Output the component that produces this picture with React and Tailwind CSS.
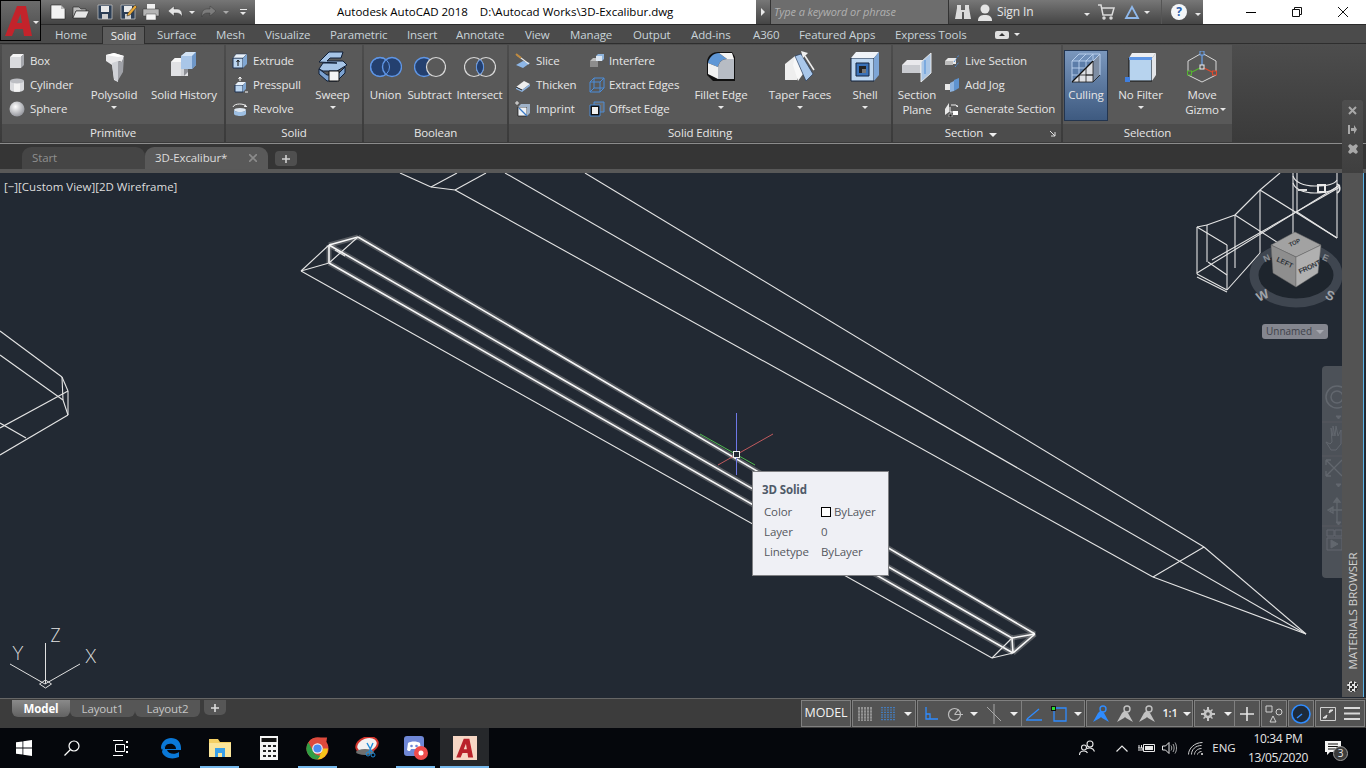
import React from 'react';

const Sm = ({ children }) => (
  <svg width="16" height="16" viewBox="0 0 16 16" className="shrink-0">{children}</svg>
);
const Lg = ({ children }) => (
  <svg width="32" height="32" viewBox="0 0 32 32" className="shrink-0">{children}</svg>
);

const Caret = ({ className = 'border-t-[#e8e8e8]' }) => (
  <span className={`inline-block w-0 h-0 border-x-[3px] border-x-transparent border-t-[3px] ${className}`} />
);
const BigCaret = () => (
  <span className="inline-block w-0 h-0 border-x-[4px] border-x-transparent border-t-[4px] border-t-[#efefef]" />
);

// ribbon small icons
const BoxIcon = () => (
  <Sm>
    <path d="M1 4h11v11H1z" fill="#d9dadd" />
    <path d="M1 4l3-3h11l-3 3z" fill="#f5f5f5" />
    <path d="M12 4l3-3v11l-3 3z" fill="#a6a8ad" />
  </Sm>
);
const CylinderIcon = () => (
  <Sm>
    <path d="M1 4v8c0 2 3 3 7 3s7-1 7-3V4z" fill="#d9dadd" />
    <path d="M5 6h6v8.6H5z" fill="#f3f3f3" />
    <ellipse cx="8" cy="4" rx="7" ry="2.6" fill="#bcbec3" />
  </Sm>
);
const SphereIcon = () => (
  <Sm>
    <defs>
      <radialGradient id="sph" cx="0.4" cy="0.35" r="0.7">
        <stop offset="0" stopColor="#ffffff" />
        <stop offset="1" stopColor="#8e9097" />
      </radialGradient>
    </defs>
    <circle cx="8" cy="8" r="7.5" fill="url(#sph)" />
  </Sm>
);
const ExtrudeIcon = () => (
  <Sm>
    <path d="M1 5h10v10H1z" fill="#bcd6f0" stroke="#1d3150" />
    <path d="M1 5l3-4h11l-4 4z" fill="#e9f1f9" stroke="#1d3150" strokeWidth=".5" />
    <path d="M11 5l4-4v10l-4 4z" fill="#7fa6d2" />
    <path d="M6 13V8M4.5 9L6 7l1.5 2" stroke="#111" fill="none" />
  </Sm>
);
const PresspullIcon = () => (
  <Sm>
    <path d="M3 8h8v7H3z" fill="#bcd6f0" stroke="#1d3150" />
    <path d="M3 8l3-3h8l-3 3z" fill="#e9f1f9" />
    <path d="M11 8l3-3v7l-3 3z" fill="#7fa6d2" />
    <path d="M8 4V0M6.5 2L8 0l1.5 2M13 15h3" stroke="#fff" fill="none" />
  </Sm>
);
const RevolveIcon = () => (
  <Sm>
    <ellipse cx="8" cy="9" rx="6" ry="2" fill="#dfe8f2" />
    <path d="M2 9v4c0 1 3 2 6 2s6-1 6-2V9c0 1-3 2-6 2S2 10 2 9z" fill="#9dbfe3" />
    <path d="M1 6c1-4 12-4 14 0" stroke="#ececec" fill="none" />
    <path d="M13 3l2 3-3 0" fill="#ececec" />
  </Sm>
);
const SliceIcon = () => (
  <Sm>
    <path d="M1 12l7-4 7 2-7 5z" fill="#8db6e6" />
    <path d="M2 2l12 9" stroke="#e8e8e8" strokeWidth="1.2" />
    <path d="M1 1l5 4" stroke="#c08a3e" strokeWidth="2" />
  </Sm>
);
const ThickenIcon = () => (
  <Sm>
    <path d="M1 10l8-6 6 3-8 6z" fill="#ededed" />
    <path d="M1 10v2l6 3 8-6V7l-8 6z" fill="#8eb3de" />
    <path d="M1 10l6 3" stroke="#222" />
  </Sm>
);
const ImprintIcon = () => (
  <Sm>
    <path d="M3 6h9v9H3z" fill="#eef2f6" stroke="#111" strokeWidth=".7" />
    <path d="M12 6l3-3v9l-3 3zM3 6l3-3h9l-3 3z" fill="#9fb2c8" />
    <path d="M4 7l8 8" stroke="#3a79c7" strokeWidth="1.2" />
    <path d="M2 0v4M0 2h4" stroke="#e8e8e8" />
  </Sm>
);
const InterfereIcon = () => (
  <Sm>
    <path d="M1 8h8v6H1z" fill="#8c8c8c" />
    <path d="M1 8l3-3h8l-3 3z" fill="#bdbdbd" />
    <path d="M7 3h6v5H7z" fill="#dce7f3" />
    <path d="M7 3l2-2h6l-2 2zM13 3l2-2v5l-2 2z" fill="#8fb4dc" />
  </Sm>
);
const ExtractIcon = () => (
  <Sm>
    <g fill="none" stroke="#4d8dd8">
      <path d="M1 5h10v10H1zM1 5l4-4h10v10l-4 4M11 5l4-4M5 1v10H15M1 15l4-4" />
    </g>
  </Sm>
);
const OffsetIcon = () => (
  <Sm>
    <path d="M5 1h10v10H5z" fill="#6a6a6a" stroke="#4d8dd8" />
    <path d="M1 4h10v11H1z" fill="#111" stroke="#4d8dd8" />
    <path d="M3 6h6v7H3z" fill="#f0f0f0" />
  </Sm>
);
const LiveSectionIcon = () => (
  <Sm>
    <path d="M1 8l3-3h8v6H1z" fill="#e8e8e8" />
    <path d="M1 8h8v4H1z" fill="#bdbdbd" />
    <path d="M10 9l5-7M11 14l4-5" stroke="#4d8dd8" strokeDasharray="2 1" />
  </Sm>
);
const AddJogIcon = () => (
  <Sm>
    <path d="M1 7h5v6H1z" fill="#e8e8e8" />
    <path d="M6 6l4-2v10l-4 1z" fill="#8eb3de" />
    <path d="M10 3l5-2v10l-5 3z" fill="#5f93cf" />
  </Sm>
);
const GenerateIcon = () => (
  <Sm>
    <path d="M1 8l4-6v9l-4 3z" fill="#e8e8e8" />
    <path d="M7 4h5l2 2M13 4v2" stroke="#eee" fill="none" />
    <path d="M6 6v5h3" stroke="#eee" fill="none" />
    <path d="M9 10h5v4H9z" fill="#fff" />
    <path d="M5 13h3v3H5z" fill="#222" stroke="#eee" strokeWidth=".5" />
  </Sm>
);

// ribbon large icons
const PolysolidIcon = () => (
  <Lg>
    <path d="M8 4l8-2 10 3-2 6-3-1-1 21-4-2-2-15-6-4z" fill="#e8e8ea" />
    <path d="M20 10l4 1 2-6-1 16-6 10z" fill="#9fa1a7" />
    <path d="M8 4l8-2 10 3-6 1z" fill="#ffffff" />
    <path d="M14 12l2 16 4 3V10z" fill="#cfd1d6" />
  </Lg>
);
const HistoryIcon = () => (
  <Lg>
    <path d="M3 11l4-4h13v18H3z" fill="#e0e1e4" />
    <path d="M3 11l4-4h13l-4 4z" fill="#f7f7f7" />
    <path d="M16 11l4-4v14l-4 4z" fill="#8d8f95" />
    <path d="M16 11h-3v14h3z" fill="#d0d2d6" />
    <path d="M13 5l5-4h10v13l-4 4H13z" fill="#a9c6e8" />
    <path d="M13 5l5-4h10l-4 4z" fill="#d4e4f5" />
    <path d="M24 5l4-4v13l-4 4z" fill="#6e97c8" />
  </Lg>
);
const SweepIcon = () => (
  <Lg>
    <path d="M2 11L12 1h14l-2 6H13l-3 3h16l4 4-10 6H6l-4-2 4-6h14z" fill="#a6c4e6" stroke="#0f1f38" strokeWidth="1" />
    <path d="M2 18l8 6h10l8-8v6l-8 8H10l-8-7z" fill="#7ca2d0" stroke="#0f1f38" strokeWidth="1" />
    <path d="M12 20h10v10H12z" fill="#f4f4f4" stroke="#111" />
  </Lg>
);
const UnionIcon = () => (
  <Lg>
    <circle cx="10" cy="16" r="9.5" fill="#24406f" stroke="#5f96e6" strokeWidth="1.4" />
    <circle cx="22" cy="16" r="9.5" fill="#24406f" stroke="#5f96e6" strokeWidth="1.4" />
    <circle cx="10" cy="16" r="9.5" fill="none" stroke="#5f96e6" strokeWidth="1" />
  </Lg>
);
const SubtractIcon = () => (
  <Lg>
    <circle cx="10" cy="16" r="9.5" fill="#24406f" stroke="#5f96e6" strokeWidth="1.4" />
    <circle cx="22" cy="16" r="9.5" fill="#595959" stroke="#d8d8d8" strokeWidth="1.2" />
  </Lg>
);
const IntersectIcon = () => (
  <Lg>
    <circle cx="10" cy="16" r="9.5" fill="none" stroke="#d8d8d8" strokeWidth="1.2" />
    <circle cx="22" cy="16" r="9.5" fill="none" stroke="#d8d8d8" strokeWidth="1.2" />
    <path d="M16 8.6a9.5 9.5 0 010 14.8a9.5 9.5 0 010-14.8z" fill="#24406f" stroke="#5f96e6" />
  </Lg>
);
const FilletIcon = () => (
  <Lg>
    <path d="M2 10C3 4 8 1 13 1h14l3 5v24H8l-6-6z" fill="#101010" />
    <path d="M3 12C4 6 9 2 14 2l8 6c-5 0-8 3-9 8z" fill="#5f97d6" />
    <path d="M13 16c1-5 4-8 9-8h7v20H13z" fill="#b7bcc4" />
    <path d="M14 2h13l2 6h-7z" fill="#f3f3f3" />
    <path d="M3 12l10 4v12l-10-5z" fill="#f1f1f1" />
  </Lg>
);
const TaperIcon = () => (
  <Lg>
    <path d="M1 13L11 5l6 4-4 20H1z" fill="#eeeeee" />
    <path d="M11 5l8 18-5 7-5-16z" fill="#f8f8f8" />
    <path d="M11 5l6-2 12 20-7 7z" fill="#a9c7ea" stroke="#1a2f50" strokeWidth=".6" />
    <path d="M21 5l9 14" stroke="#f0f0f0" strokeWidth="1.5" />
    <path d="M17 0l7 2-5 5z" fill="#f0f0f0" />
  </Lg>
);
const ShellIcon = () => (
  <Lg>
    <path d="M2 7h23v23H2z" fill="#bcd6f0" stroke="#13233d" />
    <path d="M2 7l5-6h23l-5 6z" fill="#f0f4f9" />
    <path d="M25 7l5-6v23l-5 6z" fill="#7ea6d6" />
    <path d="M7 12h13v13H7z" fill="#3a72b8" stroke="#13233d" />
    <path d="M10 15h7v7h-7z" fill="#222" />
    <path d="M13 18h4v4h-4z" fill="#777" />
  </Lg>
);
const SectionPlaneIcon = () => (
  <Lg>
    <path d="M1 14l5-5h16v13H1z" fill="#e9e9ec" />
    <path d="M1 14h18v8H1z" fill="#c9cbd0" />
    <path d="M20 11l10-9v20l-10 9z" fill="#aac6e6" stroke="#e8e8e8" />
    <path d="M24 9v14" stroke="#4d8dd8" />
  </Lg>
);
const CullingIcon = () => (
  <Lg>
    <path d="M2 9h21v21H2z" fill="#5c7da9" />
    <path d="M2 9l7-7h21l-7 7z" fill="#6f8fb9" />
    <path d="M23 9l7-7v21l-7 7z" fill="#55749f" />
    <path d="M2 30L23 9v21z" fill="#dfe0e4" />
    <path d="M23 9l7-7v21l-7 7z" fill="#9a9ea6" fillOpacity=".6" />
    <g stroke="#bcd3ef" strokeWidth=".9" fill="none">
      <path d="M2 9h21M9 9v14M16 9v7M2 16h14M2 23h7M2 9v21M2 9l7-7h21v21M9 9l7-7M16 9l7-7M23 9l7-7M23 2v7" />
    </g>
    <g stroke="#1a1a1a" strokeWidth=".8" fill="none">
      <path d="M23 9v21H2M16 16v14M9 23v7M16 23h7M9 23h14M23 30l7-7" />
    </g>
    <path d="M2 30L23 9" stroke="#111" strokeWidth="1.2" />
  </Lg>
);
const NoFilterIcon = () => (
  <Lg>
    <path d="M4 7h23v23H4z" fill="#b7d3ee" stroke="#111" />
    <path d="M4 7l3-5h24l-4 5z" fill="#eceef1" />
    <path d="M27 7l4-5v22l-4 6z" fill="#e4e6e9" />
    <path d="M4 6h23v3H4z" fill="#5f97e6" />
    <path d="M0 26h5v5H0z" fill="#3f7fe0" />
  </Lg>
);
const GizmoIcon = () => (
  <Lg>
    <path d="M16 2L30 10v14l-14 7L2 24V10z" fill="none" stroke="#d8d8d8" />
    <path d="M16 16V4" stroke="#6aa3ee" strokeWidth="1.2" />
    <path d="M16 16L4 22" stroke="#55b52f" strokeWidth="1.2" />
    <path d="M16 16l12 6" stroke="#e0492c" strokeWidth="1.2" />
    <rect x="14" y="0" width="4" height="4" fill="#595959" stroke="#6aa3ee" />
    <rect x="14" y="14" width="4" height="4" fill="#595959" stroke="#eee" />
    <rect x="1.5" y="20" width="4" height="4" fill="#595959" stroke="#55b52f" />
    <rect x="26.5" y="20" width="4" height="4" fill="#595959" stroke="#e0492c" />
  </Lg>
);

const SmallRow = ({ icon, label }) => (
  <div className="h-6 flex items-center gap-[5px] whitespace-nowrap">
    {icon}
    <span>{label}</span>
  </div>
);

const LargeBtn = ({ icon, lines, className, arrow = true }) => (
  <div className={`flex flex-col items-center pt-[6px] shrink-0 ${className}`}>
    {icon}
    <div className="mt-[4px] leading-[15px] text-center whitespace-nowrap">
      {lines.map((l) => (
        <div key={l}>{l}</div>
      ))}
    </div>
    {arrow && <div className="leading-[6px] h-[6px]"><Caret /></div>}
  </div>
);

const Panel = ({ title, className, children, footer }) => (
  <div className={`h-[97px] flex flex-col bg-[#595959] shrink-0 ${className}`}>
    <div className="h-[79px] flex">{children}</div>
    <div className="h-[18px] bg-[#4c4c4c] flex items-center justify-center leading-none relative">
      {footer || title}
    </div>
  </div>
);

const QatNew = () => (
  <svg width="18" height="18" viewBox="0 0 18 18"><path d="M2 2h10l4 4v10H2z" fill="#f2f2f2" stroke="#222" strokeWidth=".6" /><path d="M12 2v4h4z" fill="#bbb" /></svg>
);
const QatOpen = () => (
  <svg width="18" height="18" viewBox="0 0 18 18"><path d="M1 4h6l2 2h5v2H4l-3 7z" fill="#bdbdbd" stroke="#222" strokeWidth=".6" /><path d="M4 8h13l-3 7H1z" fill="#e6e6e6" stroke="#222" strokeWidth=".6" /></svg>
);
const QatSave = ({ pen }) => (
  <svg width="18" height="18" viewBox="0 0 18 18"><path d="M2 2h14v14H2z" fill="#2c3e55" stroke="#ccc" strokeWidth=".7" /><path d="M5 3h8v6H5z" fill="#e8e8e8" /><path d="M6 11h6v5H6z" fill="#cfcfcf" />{pen && <path d="M9 10l7-8 2 2-7 8-3 1z" fill="#e9a93a" stroke="#222" strokeWidth=".5" />}</svg>
);
const QatPrint = () => (
  <svg width="18" height="18" viewBox="0 0 18 18"><path d="M5 1h8v5H5z" fill="#f0f0f0" /><path d="M1 6h16v7H1z" fill="#b5b5b5" stroke="#333" strokeWidth=".5" /><path d="M4 11h10v6H4z" fill="#f5f5f5" stroke="#444" strokeWidth=".5" /></svg>
);
const QatArrow = ({ dim, flip }) => (
  <svg width="16" height="16" viewBox="0 0 16 16" className={flip ? '-scale-x-100' : ''}><path d="M1 7l6-5v3h3c3 0 5 2 5 5v3c-1-3-3-4-5-4H7v3z" fill={dim ? '#7c7c7c' : '#e4e4e4'} stroke="#333" strokeWidth=".4" /></svg>
);

const StatusIcon = {
  grid: (
    <svg width="14" height="14" viewBox="0 0 14 14" stroke="#d4d4d4" strokeWidth="1"><path d="M1 0v14M4 0v14M7 0v14M10 0v14M13 0v14" /><path d="M0 3h14M0 6h14M0 9h14M0 12h14" stroke="#535353" strokeOpacity=".6" /></svg>
  ),
  dots: (
    <svg width="14" height="14" viewBox="0 0 14 14" stroke="#3a96ff" strokeWidth="1.200" strokeDasharray="1.200 1.200"><path d="M1 0v14M4 0v14M7 0v14M10 0v14M13 0v14" /></svg>
  ),
  ortho: (
    <svg width="14" height="14" viewBox="0 0 14 14" fill="none" stroke="#2f8cff" strokeWidth="1.3"><path d="M2 0v12h12M2 7h4v5" /></svg>
  ),
  polar: (
    <svg width="16" height="16" viewBox="0 0 16 16" fill="none" stroke="#bdbdbd" strokeWidth="1.2"><circle cx="7.5" cy="8.5" r="6" /><path d="M7.5 8.5H16M7.5 8.5l4-5" /></svg>
  ),
  iso: (
    <svg width="16" height="20" viewBox="0 0 16 20" fill="none" stroke="#a8a8a8" strokeWidth="1"><path d="M8 0v20M1 3l14 14" /></svg>
  ),
  osnap: (
    <svg width="18" height="14" viewBox="0 0 18 14" fill="none" stroke="#2f8cff" strokeWidth="1.3"><path d="M1 13h16M2 12L14 2" /></svg>
  ),
  square: (
    <svg width="16" height="16" viewBox="0 0 16 16" fill="none"><path d="M3 2h12v13H3z" stroke="#2f8cff" strokeWidth="1.3" /><path d="M0 0h5v5H0z" fill="#111" /><path d="M1 1h3v3H1z" fill="#2ee02e" /></svg>
  ),
  anno: (color) => (
    <svg width="18" height="18" viewBox="0 0 18 18"><path d="M9 5l3 3 5 9-7-4-1-1-1 1-7 4 5-9z" fill={color} /><circle cx="11" cy="4" r="3" fill="#525252" stroke={color} strokeWidth="1.4" /></svg>
  ),
  gear: (
    <svg width="14" height="14" viewBox="0 0 14 14"><circle cx="7" cy="7" r="4.4" fill="#c6c6c6" /><path d="M6 0h2v14H6zM0 6h14v2H0zM2 3l1-1 9 9-1 1zM11 2l1 1-9 9-1-1z" fill="#c6c6c6" /><circle cx="7" cy="7" r="1.8" fill="#525252" /></svg>
  ),
  plus: (
    <svg width="14" height="14" viewBox="0 0 14 14" stroke="#e4e4e4" strokeWidth="1.6"><path d="M7 0v14M0 7h14" /></svg>
  ),
  shapes: (
    <svg width="18" height="18" viewBox="0 0 18 18" fill="none" stroke="#d0d0d0"><path d="M1 1h6v6H1zM5 17l3-6 3 6z" /><circle cx="14" cy="7" r="3" /></svg>
  ),
  clean: (
    <svg width="20" height="20" viewBox="0 0 20 20" fill="none"><circle cx="10" cy="10" r="9" fill="#1d2a3a" stroke="#2f8cff" strokeWidth="1.6" /><path d="M6 14l5-4" stroke="#2f8cff" strokeWidth="1.4" /></svg>
  ),
  full: (
    <svg width="16" height="14" viewBox="0 0 16 14"><path d="M.5.5h15v13H.5z" fill="none" stroke="#d0d0d0" /><path d="M3 11l4-3-1 3zM13 3L9 6l1-3z" fill="#e0e0e0" stroke="#e0e0e0" /></svg>
  ),
  menu: (
    <svg width="16" height="13" viewBox="0 0 16 13" stroke="#d8d8d8" strokeWidth="2"><path d="M0 1h16M0 6.5h16M0 12h16" /></svg>
  ),
};

// wireframe geometry in page coordinates
const glowLines = [
  [329, 245, 1012, 638],
  [358, 237, 1035, 634],
  [329, 263, 1013, 653],
  [329, 245, 358, 237],
  [329, 245, 329, 263],
  [1012, 638, 1035, 634],
  [1012, 638, 1013, 653],
  [1013, 653, 1035, 634],
];
const thinLines = [
  [301, 271, 329, 245], [301, 271, 329, 263], [329, 263, 358, 237], [301, 271, 992, 658],
  [992, 658, 1012, 638], [992, 658, 1013, 653], [335, 250, 345, 256],
  [400, 173, 431, 187], [431, 187, 457, 173], [431, 187, 455, 190], [455, 190, 486, 173],
  [455, 190, 1153, 577], [505, 173, 1306, 634], [585, 173, 1204, 547], [1204, 547, 1153, 577],
  [1204, 547, 1306, 634], [1153, 577, 1306, 634],
  [0, 331, 62, 377], [0, 355, 63, 400], [62, 377, 68, 391], [62, 377, 63, 400], [68, 391, 68, 415],
  [63, 400, 68, 415], [68, 391, 0, 428], [68, 415, 0, 455], [0, 423, 26, 438],
  [1197, 227, 1197, 274], [1197, 227, 1227, 245], [1227, 245, 1227, 290], [1197, 274, 1227, 290],
  [1197, 277, 1227, 292], [1207, 225, 1207, 262], [1197, 227, 1207, 225], [1207, 225, 1235, 215],
  [1235, 215, 1260, 190], [1260, 190, 1280, 173], [1235, 215, 1235, 268], [1260, 190, 1260, 253],
  [1260, 190, 1337, 238], [1235, 215, 1297, 255], [1197, 273, 1340, 185], [1212, 260, 1340, 187],
  [1293, 173, 1293, 247], [1337, 173, 1337, 238], [1227, 290, 1260, 253], [1297, 212, 1337, 238],
  [1208, 262, 1227, 275], [1297, 173, 1297, 212],
];

const Taskbtn = ({ className, children }) => (
  <div className={`h-10 flex items-center justify-center shrink-0 ${className}`}>{children}</div>
);

const App = () => {
  return (
    <div className="relative w-[1366px] h-[768px] overflow-hidden flex flex-col bg-[#3b3b3b] font-['Open_Sans',sans-serif] text-[11.5px] tracking-[-0.12px] text-[#e6e6e6]">
      {/* application button */}
      <div className="absolute left-0 top-0 w-[41px] h-[41px] z-20 bg-gradient-to-b from-[#6b6b6b] to-[#4a4a4a] border border-black flex items-center">
        <svg width="30" height="32" viewBox="0 0 30 32" className="ml-[3px]">
          <path fillRule="evenodd" d="M1 31L13 1h9l6 30h-8l-1-7H11l-3 7zM13 18h5l-1.500-9z" fill="#c3232b" />
        </svg>
        <span className="ml-[-1px] mt-[-1px]"><Caret /></span>
      </div>

      {/* title bar */}
      <div className="h-6 flex bg-white shrink-0">
        <div className="w-[255px] ml-0 pl-[46px] flex items-center bg-gradient-to-b from-[#767676] to-[#444444] shrink-0">
          <div className="w-6 flex justify-center"><QatNew /></div>
          <div className="w-6 flex justify-center"><QatOpen /></div>
          <div className="w-6 flex justify-center"><QatSave /></div>
          <div className="w-6 flex justify-center"><QatSave pen /></div>
          <div className="w-6 flex justify-center"><QatPrint /></div>
          <div className="w-6 flex justify-center"><QatArrow /></div>
          <div className="w-[11px] flex justify-center"><Caret /></div>
          <div className="w-6 flex justify-center"><QatArrow dim flip /></div>
          <div className="w-[11px] flex justify-center"><Caret className="border-t-[#aaaaaa]" /></div>
          <div className="w-[24px] flex flex-col items-center gap-[2px]">
            <div className="w-[7px] h-[1px] bg-[#e8e8e8]" />
            <Caret />
          </div>
        </div>
        <div className="w-[501px] pl-[82px] flex items-center whitespace-pre tracking-normal text-black shrink-0">
          Autodesk AutoCAD 2018    D:\Autocad Works\3D-Excalibur.dwg
        </div>
        <div className="w-[447px] flex items-center bg-gradient-to-b from-[#777777] to-[#454545] shrink-0">
          <div className="w-[15px] h-full flex items-center justify-center border-r border-[#333]">
            <span className="w-0 h-0 border-y-[4px] border-y-transparent border-l-[4px] border-l-[#e8e8e8]" />
          </div>
          <div className="w-[178px] h-full pl-[3px] flex items-center italic text-[11px] text-[#b0b0b0] bg-[#6d6d6d] border-r border-[#333] whitespace-nowrap">
            Type a keyword or phrase
          </div>
          <div className="w-[25px] flex justify-center ml-[1px]">
            <svg width="16" height="16" viewBox="0 0 16 16" fill="#dcdcdc"><path d="M2 1h4v5h4V1h4v3l2 11H9V8H7v7H0L2 4z" /></svg>
          </div>
          <div className="flex items-center gap-[4px] w-[116px] pl-[2px] text-[12px]">
            <svg width="16" height="17" viewBox="0 0 16 17" fill="#e4e4e4"><circle cx="8" cy="5" r="4.500" /><path d="M1 17c0-5 3-6 7-6s7 1 7 6z" /></svg>
            <span>Sign In</span>
            <span className="ml-auto mr-[1px]"><Caret /></span>
          </div>
          <div className="w-[24px] flex justify-center ml-[3px]">
            <svg width="17" height="16" viewBox="0 0 17 16" fill="none" stroke="#dcdcdc" strokeWidth="1.500"><path d="M0 1h3l2 10h9l2-7H4" /><circle cx="6" cy="14" r="1" /><circle cx="13" cy="14" r="1" /></svg>
          </div>
          <div className="w-[24px] flex justify-center ml-[2px]">
            <svg width="16" height="15" viewBox="0 0 16 15" fill="none" stroke="#8fb8ea" strokeWidth="1.800"><path d="M8 2L2 13h12z" /></svg>
          </div>
          <Caret />
          <div className="w-[1px] h-full bg-[#555] ml-[11px]" />
          <div className="w-[16px] h-[16px] ml-[9px] rounded-full bg-[#f4f6f8] text-[#2a5fae] font-bold text-[12px] leading-[16px] text-center">?</div>
          <span className="ml-[8px]"><Caret /></span>
        </div>
        <div className="flex-1 flex items-center text-black">
          <div className="w-[47px] ml-[24px] flex justify-center"><div className="w-[10px] h-[1px] bg-black" /></div>
          <div className="w-[46px] flex justify-center">
            <svg width="10" height="10" viewBox="0 0 10 10" fill="none" stroke="#111"><path d="M.5 2.500h7v7h-7zM2.500 2.500v-2h7v7h-2" /></svg>
          </div>
          <div className="w-[46px] flex justify-center">
            <svg width="10" height="10" viewBox="0 0 10 10" stroke="#111"><path d="M0 0l10 10M10 0L0 10" /></svg>
          </div>
        </div>
      </div>

      {/* ribbon tabs */}
      <div className="h-5 flex items-center shrink-0 bg-[#4b4b4b] border-t border-[#2a2a2a] border-b border-b-[#2e2e2e] pl-[42px] pt-[1px] text-[#c9d3d9] whitespace-nowrap">
        <div className="w-[60px] pl-[13px]">Home</div>
        <div className="w-[43px] h-[18px] mt-[1px] flex items-center justify-center bg-[#5c5c5c] border-x border-t border-[#2e2e2e] text-[#f0f0f0]">Solid</div>
        <div className="w-[71px] pl-[12px]">Surface</div>
        <div className="w-[49px]">Mesh</div>
        <div className="w-[65px]">Visualize</div>
        <div className="w-[77px]">Parametric</div>
        <div className="w-[49px]">Insert</div>
        <div className="w-[69px]">Annotate</div>
        <div className="w-[45px]">View</div>
        <div className="w-[63px]">Manage</div>
        <div className="w-[58px]">Output</div>
        <div className="w-[62px]">Add-ins</div>
        <div className="w-[46px]">A360</div>
        <div className="w-[96px]">Featured Apps</div>
        <div className="w-[100px]">Express Tools</div>
        <div className="flex items-center gap-[5px]">
          <div className="w-[14px] h-[8px] rounded-[2px] bg-[#e0e0e0] flex items-center justify-center">
            <span className="w-0 h-0 border-x-[3px] border-x-transparent border-b-[3px] border-b-[#333]" />
          </div>
          <Caret />
        </div>
      </div>

      {/* ribbon panels */}
      <div className="h-[100px] flex gap-[2px] pl-[2px] pt-[1px] shrink-0 bg-gradient-to-b from-[#4d4d4d] to-[#3a3a3a] border-b border-[#8c8c8c]">
        <Panel title="Primitive" className="w-[222px]">
          <div className="w-[82px] pl-[7px] pt-[4px]">
            <SmallRow icon={<BoxIcon />} label="Box" />
            <SmallRow icon={<CylinderIcon />} label="Cylinder" />
            <SmallRow icon={<SphereIcon />} label="Sphere" />
          </div>
          <LargeBtn icon={<PolysolidIcon />} lines={['Polysolid']} className="w-[60px]" />
          <LargeBtn icon={<HistoryIcon />} lines={['Solid History']} arrow={false} className="w-[80px]" />
        </Panel>
        <Panel title="Solid" className="w-[136px]">
          <div className="w-[77px] pl-[6px] pt-[4px]">
            <SmallRow icon={<ExtrudeIcon />} label="Extrude" />
            <SmallRow icon={<PresspullIcon />} label="Presspull" />
            <SmallRow icon={<RevolveIcon />} label="Revolve" />
          </div>
          <LargeBtn icon={<SweepIcon />} lines={['Sweep']} className="w-[59px]" />
        </Panel>
        <Panel title="Boolean" className="w-[143px]">
          <LargeBtn icon={<UnionIcon />} lines={['Union']} arrow={false} className="w-[43px]" />
          <LargeBtn icon={<SubtractIcon />} lines={['Subtract']} arrow={false} className="w-[45px]" />
          <LargeBtn icon={<IntersectIcon />} lines={['Intersect']} arrow={false} className="w-[55px]" />
        </Panel>
        <Panel title="Solid Editing" className="w-[382px]">
          <div className="w-[74px] pl-[6px] pt-[4px]">
            <SmallRow icon={<SliceIcon />} label="Slice" />
            <SmallRow icon={<ThickenIcon />} label="Thicken" />
            <SmallRow icon={<ImprintIcon />} label="Imprint" />
          </div>
          <div className="w-[105px] pl-[6px] pt-[4px] [&>div]:gap-[4px]">
            <SmallRow icon={<InterfereIcon />} label="Interfere" />
            <SmallRow icon={<ExtractIcon />} label="Extract Edges" />
            <SmallRow icon={<OffsetIcon />} label="Offset Edge" />
          </div>
          <LargeBtn icon={<FilletIcon />} lines={['Fillet Edge']} className="w-[66px]" />
          <LargeBtn icon={<TaperIcon />} lines={['Taper Faces']} className="w-[92px]" />
          <LargeBtn icon={<ShellIcon />} lines={['Shell']} className="w-[38px]" />
        </Panel>
        <Panel
          className="w-[168px]"
          footer={
            <>
              <span>Section</span>
              <span className="ml-[6px] mr-[12px] leading-none"><BigCaret /></span>
              <svg width="7" height="7" viewBox="0 0 7 7" stroke="#e0e0e0" fill="none" className="absolute right-[5px] top-[6px]"><path d="M1 1l5 5M2 6h4V2" /></svg>
            </>
          }
        >
          <LargeBtn icon={<SectionPlaneIcon />} lines={['Section', 'Plane']} arrow={false} className="w-[48px]" />
          <div className="pl-[3px] pt-[4px]">
            <SmallRow icon={<LiveSectionIcon />} label="Live Section" />
            <SmallRow icon={<AddJogIcon />} label="Add Jog" />
            <SmallRow icon={<GenerateIcon />} label="Generate Section" />
          </div>
        </Panel>
        <Panel title="Selection" className="w-[169px]">
          <div className="w-[46px] pl-[1px] pt-[5px]">
            <div className="w-[44px] h-[71px] flex flex-col items-center pt-[1px] gap-[3px] leading-[15px] bg-gradient-to-b from-[#7a97bd] to-[#3e5a80] border border-[#23354f]">
              <CullingIcon />
              <span>Culling</span>
            </div>
          </div>
          <LargeBtn icon={<NoFilterIcon />} lines={['No Filter']} className="w-[63px]" />
          <div className="w-[60px] relative">
            <LargeBtn icon={<GizmoIcon />} lines={['Move', 'Gizmo']} arrow={false} className="w-[60px]" />
            <span className="absolute right-[6px] top-[56px] leading-none"><Caret /></span>
          </div>
        </Panel>
      </div>

      {/* file tabs */}
      <div className="h-[29px] flex flex-col shrink-0 bg-[#353535]">
        <div className="h-[25px] flex items-end pl-[22px]">
          <div className="w-[123px] h-[22px] pl-[10px] flex items-center rounded-t-[9px] bg-[#454545] text-[#8f8f8f]">Start</div>
          <div className="w-[123px] h-[22px] pl-[10px] flex items-center justify-between pr-[11px] rounded-t-[9px] bg-[#595959] text-[#dcdcdc]">
            <span>3D-Excalibur*</span>
            <svg width="8" height="8" viewBox="0 0 8 8" stroke="#8b8b8b" strokeWidth="1.600"><path d="M0 0l8 8M8 0L0 8" /></svg>
          </div>
          <div className="w-[22px] h-[15px] ml-[7px] mb-[3px] flex items-center justify-center rounded-[4px] bg-[#4f4f4f]">
            <svg width="8" height="8" viewBox="0 0 8 8" stroke="#cfcfcf" strokeWidth="1.600"><path d="M4 0v8M0 4h8" /></svg>
          </div>
        </div>
        <div className="h-1 bg-[#585858]" />
      </div>

      {/* drawing area */}
      <div className="h-[525px] relative shrink-0 bg-[#222933] overflow-hidden">
        <svg width="1366" height="525" viewBox="0 173 1366 525" className="absolute left-0 top-0">
          <g stroke="#a8a8a8" strokeOpacity=".4" strokeWidth="5" fill="none">
            {glowLines.map((l, i) => (
              <line key={i} x1={l[0]} y1={l[1]} x2={l[2]} y2={l[3]} />
            ))}
          </g>
          <g stroke="#f8f8f8" strokeWidth="1.600" fill="none">
            {glowLines.map((l, i) => (
              <line key={i} x1={l[0]} y1={l[1]} x2={l[2]} y2={l[3]} />
            ))}
          </g>
          <g stroke="#e4e4e4" strokeWidth="1.100" fill="none">
            {thinLines.map((l, i) => (
              <line key={i} x1={l[0]} y1={l[1]} x2={l[2]} y2={l[3]} />
            ))}
            <path d="M1293 176c2 6 10 10 22 10s20-2 22-6M1293 183c2 6 10 10 22 10s20-3 22-7" />
          </g>

          {/* crosshair */}
          <line x1="736.500" y1="413" x2="736.500" y2="475" stroke="#6e78e6" />
          <line x1="700" y1="434" x2="755" y2="465" stroke="#4fb84f" />
          <line x1="718" y1="465" x2="773" y2="434" stroke="#c05a5e" />
          <rect x="733.500" y="451.500" width="6" height="6" fill="#222933" stroke="#f0f0f0" />

          {/* ucs icon */}
          <g stroke="#e0e0e0" fill="none">
            <path d="M45.500 643v41M10 664l35 20M80 664l-35 20M45.500 680l6 4-6 4-6-4z" />
          </g>
          <g fontFamily="Inter, sans-serif" fontWeight="200" fontSize="18" fill="#e4e4e4">
            <text x="50" y="642">Z</text>
            <text x="12" y="660">Y</text>
            <text x="85" y="663">X</text>
          </g>

          {/* viewcube */}
          <ellipse cx="1296" cy="275" rx="42" ry="28" fill="#1d232b" fillOpacity=".7" stroke="#3f4650" strokeWidth="9" />
          <path d="M1295 232l26 13-25 12-25-12z" fill="#a2a2a2" stroke="#666" strokeWidth=".5" />
          <path d="M1271 245l25 12v30l-23-14z" fill="#8e8e8e" stroke="#666" strokeWidth=".5" />
          <path d="M1321 245l-25 12v30l22-14z" fill="#b0b0b0" stroke="#666" strokeWidth=".5" />
          <g fontFamily="Liberation Sans, sans-serif" fontWeight="700" fill="#2f343a">
            <text fontSize="7" transform="translate(1276 261) rotate(25)">LEFT</text>
            <text fontSize="7" transform="translate(1300 274) rotate(-25)">FRONT</text>
            <text fontSize="6" transform="translate(1290 247) rotate(-25)">TOP</text>
          </g>
          <g fontFamily="Liberation Sans, sans-serif" fontWeight="700" fill="#a0a4aa" fontSize="13">
            <text x="1256" y="300" transform="rotate(-25 1262 295)">W</text>
            <text x="1326" y="300" transform="rotate(25 1330 295)">S</text>
            <text x="1263" y="261" fontSize="9" fill="#8a8e94" transform="rotate(-25 1267 257)">N</text>
            <text x="1323" y="261" fontSize="9" fill="#8a8e94" transform="rotate(25 1326 257)">E</text>
          </g>

          {/* window gizmo over the wireframe */}
          <rect x="1298" y="189" width="9" height="2" fill="#dcdcdc" />
          <rect x="1318" y="185" width="7" height="7" fill="none" stroke="#e8e8e8" strokeWidth="2" />
          <path d="M1337 184a5 5 0 010 9" fill="none" stroke="#e8e8e8" strokeWidth="1.500" />
        </svg>

        <div className="absolute left-[4px] top-[6px] leading-4 tracking-normal text-[#dedede] whitespace-nowrap">[−][Custom View][2D Wireframe]</div>

        <div className="absolute left-[1262px] top-[151px] w-[66px] h-[15px] flex items-center justify-between px-[4px] rounded-[3px] bg-[#84868f] text-[10px] tracking-normal text-[#3f424a]">
          <span>Unnamed</span>
          <span className="w-0 h-0 border-x-[4px] border-x-transparent border-t-[4px] border-t-[#a8aab2]" />
        </div>

        {/* navigation bar */}
        <div className="absolute left-[1322px] top-[193px] w-[24px] h-[212px] rounded-l-[4px] bg-[#4c5158]">
          <svg width="24" height="212" viewBox="0 0 24 212" fill="none" stroke="#62676e">
            <circle cx="15" cy="31" r="11" strokeWidth="1.500" />
            <circle cx="15" cy="31" r="6" strokeWidth="1.500" />
            <path d="M14 50h5l-2.500 3z" fill="#62676e" />
            <path d="M0 56h20" stroke="#56595f" />
            <path d="M4 76l4 2 2-2-1-14 2 8V60l2 10 1-10 2 10 3-6v14l-5 6H9z" />
            <path d="M0 90h20" stroke="#56595f" />
            <path d="M4 94l16 16M4 110L20 94M4 94h5M4 94v5M4 110h5M4 110v-5" strokeWidth="1.300" />
            <path d="M14 118h5l-2.500 3z" fill="#62676e" />
            <path d="M15 132v24M8 144h14M15 132l-3 4h6zM6 144l5-3v6z" strokeWidth="1.300" />
            <path d="M14 156h5l-2.500 3z" fill="#62676e" />
            <path d="M0 160h20" stroke="#56595f" />
            <path d="M5 164h7v6H5zM13 164h7v6h-7zM5 172h15v12H5z" />
            <path d="M9 174l7 4-7 4z" fill="#62676e" />
          </svg>
        </div>

        {/* rollover tooltip */}
        <div className="absolute left-[752px] top-[298px] w-[137px] h-[105px] pl-[9px] pt-[10px] bg-[#eff0f5] border border-[#7f8083] text-[#55585e]">
          <div className="font-bold leading-[15px] text-[#4f5a68]">3D Solid</div>
          <div className="grid grid-cols-[57px_1fr] pl-[2px] mt-[5px] auto-rows-[20px] items-center">
            <span>Color</span>
            <span className="flex items-center gap-[3px]">
              <span className="w-[10px] h-[10px] bg-white border border-black" />
              ByLayer
            </span>
            <span>Layer</span>
            <span>0</span>
            <span>Linetype</span>
            <span>ByLayer</span>
          </div>
        </div>
      </div>

      {/* model tabs and status bar */}
      <div className="h-[30px] flex shrink-0 bg-[#3c3c3c] border-t border-[#666666] pb-[1px]">
        <div className="w-[800px] flex items-start pl-[12px] shrink-0">
          <div className="w-[58px] h-[17px] mt-[1px] flex items-center justify-center rounded-b-[6px] bg-gradient-to-b from-[#8a8a8a] to-[#626262] font-bold text-white">Model</div>
          <div className="w-[65px] h-[17px] mt-[1px] flex items-center justify-center rounded-b-[6px] bg-[#565656] text-[#c6c6c6]">Layout1</div>
          <div className="w-[65px] h-[17px] mt-[1px] flex items-center justify-center rounded-b-[6px] bg-[#565656] text-[#c6c6c6]">Layout2</div>
          <div className="w-[22px] h-[15px] mt-[1px] ml-[4px] flex items-center justify-center rounded-b-[5px] bg-[#565656]">
            <svg width="8" height="8" viewBox="0 0 8 8" stroke="#dcdcdc" strokeWidth="1.600"><path d="M4 0v8M0 4h8" /></svg>
          </div>
        </div>
        <div className="flex-1 flex pt-[1px] pl-[1px] pr-[1px] gap-[1px] [&>div]:h-[27px] [&>div]:flex [&>div]:border [&>div]:border-[#808080] [&>div]:bg-[#535353] [&>div]:items-center text-[#f2f2f2]">
          <div className="w-[50px] justify-center text-[12.500px]">MODEL</div>
          <div className="w-[64px]">
            <span className="w-[23px] flex justify-center">{StatusIcon.grid}</span>
            <span className="w-[24px] flex justify-center">{StatusIcon.dots}</span>
            <span className="w-[15px] flex justify-center"><BigCaret /></span>
          </div>
          <div className="w-[168px]">
            <span className="w-[26px] flex justify-center">{StatusIcon.ortho}</span>
            <span className="w-[22px] flex justify-center">{StatusIcon.polar}</span>
            <span className="w-[16px] flex justify-center"><BigCaret /></span>
            <span className="w-[24px] flex justify-center">{StatusIcon.iso}</span>
            <span className="w-[16px] h-full flex items-center justify-center border-r border-[#808080]"><BigCaret /></span>
            <span className="w-[23px] flex justify-center">{StatusIcon.osnap}</span>
            <span className="w-[27px] flex justify-center">{StatusIcon.square}</span>
            <span className="w-[12px] flex justify-center"><BigCaret /></span>
          </div>
          <div className="w-[107px]">
            <span className="w-[27px] flex justify-center">{StatusIcon.anno('#2f8cff')}</span>
            <span className="w-[21px] flex justify-center">{StatusIcon.anno('#c2c2c2')}</span>
            <span className="w-[24px] flex justify-center">{StatusIcon.anno('#c2c2c2')}</span>
            <span className="w-[22px] text-center font-semibold text-[11px]">1:1</span>
            <span className="w-[11px] flex justify-center"><BigCaret /></span>
          </div>
          <div className="w-[66px]">
            <span className="w-[26px] flex justify-center">{StatusIcon.gear}</span>
            <span className="w-[14px] h-full flex items-center justify-center border-r border-[#808080]"><BigCaret /></span>
            <span className="w-[24px] flex justify-center">{StatusIcon.plus}</span>
          </div>
          <div className="w-[26px] justify-center">{StatusIcon.shapes}</div>
          <div className="w-[26px] justify-center">{StatusIcon.clean}</div>
          <div className="flex-1">
            <span className="w-[24px] flex justify-center">{StatusIcon.full}</span>
            <span className="w-[24px] flex justify-center">{StatusIcon.menu}</span>
          </div>
        </div>
      </div>

      {/* windows taskbar */}
      <div className="h-10 flex items-center shrink-0 bg-[#05070c] text-[#e6e6e6]">
        <Taskbtn className="w-12">
          <svg width="16" height="16" viewBox="0 0 16 16" fill="#ffffff"><path d="M0 2.300l6.500-.9v6.200H0zM7.300 1.300L16 0v7.600H7.300zM0 8.400h6.500v6.200L0 13.700zM7.300 8.400H16V16l-8.700-1.200z" /></svg>
        </Taskbtn>
        <Taskbtn className="w-12">
          <svg width="16" height="16" viewBox="0 0 16 16" fill="none" stroke="#fff" strokeWidth="1.200"><circle cx="10" cy="6" r="5" /><path d="M6.500 9.500L.5 15.500" /></svg>
        </Taskbtn>
        <Taskbtn className="w-[50px]">
          <svg width="16" height="16" viewBox="0 0 16 16" fill="none" stroke="#fff"><path d="M0 .5h10M0 15.500h10M2.500 4.500h9v7h-9z" /><path d="M14 1v2M14 6v2M14 11v2" strokeWidth="2" /></svg>
        </Taskbtn>
        <Taskbtn className="w-[49px]">
          <svg width="22" height="22" viewBox="0 0 22 22"><path fillRule="evenodd" d="M1 11C1 5 6 1 11 1c6 0 10 4 10 10v2H7c1 4 8 5 12 2v5c-7 3-15 1-17-5 0-2 2-6 6-8-3 2-3 3-3 5h11c0-5-7-7-11-3l-3 4z" fill="#0a78d7" /></svg>
        </Taskbtn>
        <Taskbtn className="w-[49px] relative">
          <svg width="22" height="20" viewBox="0 0 22 20"><path d="M0 1h9l2 3h11v15H0z" fill="#f4cf63" /><path d="M0 5h22v14H0z" fill="#fbe59a" /><path d="M6 10h10v9H6z" fill="#3aa0e8" /><path d="M9 15h4v4H9z" fill="#fbe59a" /></svg>
          <div className="absolute bottom-0 left-[5px] w-[39px] h-[2px] bg-[#76b9ed]" />
        </Taskbtn>
        <Taskbtn className="w-[49px]">
          <svg width="18" height="24" viewBox="0 0 18 24"><path d="M0 0h18v24H0z" fill="#f5f5f5" /><path d="M1.500 2h15v4h-15z" fill="#111" /><path d="M3 9h3v2H3zM8 9h3v2H8zM13 9h3v2h-3zM3 14h3v2H3zM8 14h3v2H8zM13 14h3v2h-3zM3 19h3v2H3zM8 19h3v2H8zM13 19h3v2h-3z" fill="#222" /></svg>
        </Taskbtn>
        <Taskbtn className="w-[49px] relative">
          <svg width="23" height="23" viewBox="0 0 24 24"><circle cx="12" cy="12" r="11.500" fill="#dd4a3d" /><path d="M12 12L2.300 6A11.500 11.500 0 0112 .5h10l-1 6z" fill="#dd4a3d" /><path d="M2.500 5.500L8 16l4 7.500A11.500 11.500 0 012.500 5.500z" fill="#2f9e44" /><path d="M12 23.500L18 12h5a11.500 11.500 0 01-11 11.500z" fill="#f7c419" /><path d="M8 16l4 7.500 3-4c-3 0-6-1-7-3.500z" fill="#2f9e44" /><circle cx="12" cy="12" r="5.500" fill="#f4f4f4" /><circle cx="12" cy="12" r="4.300" fill="#4a8bf0" /></svg>
          <div className="absolute bottom-0 left-[5px] w-[39px] h-[2px] bg-[#76b9ed]" />
        </Taskbtn>
        <Taskbtn className="w-[49px]">
          <svg width="24" height="22" viewBox="0 0 24 22"><ellipse cx="12" cy="8" rx="11" ry="7.500" transform="rotate(-18 12 8)" fill="#f2f2f2" stroke="#d0342c" strokeWidth="2" /><ellipse cx="10" cy="15" rx="9" ry="3" fill="#6f6f6f" /><path d="M12 6l5 9M18 6l-4 9" stroke="#1d8ad8" strokeWidth="1.400" /><circle cx="13" cy="17" r="2" fill="none" stroke="#1d8ad8" /><circle cx="18" cy="18" r="2" fill="none" stroke="#1d8ad8" /></svg>
        </Taskbtn>
        <Taskbtn className="w-[49px] relative">
          <svg width="24" height="24" viewBox="0 0 24 24"><rect x="0" y="0" width="20" height="20" rx="3" fill="#6f87d6" /><path d="M4 7c3-2 9-2 12 0l1 7c-1 1-2 1-3 1l-1-2H7l-1 2c-1 0-2 0-3-1z" fill="#fff" /><circle cx="7.500" cy="10" r="1.300" fill="#6f87d6" /><circle cx="12.500" cy="10" r="1.300" fill="#6f87d6" /><circle cx="17" cy="17" r="7" fill="#ef4b4b" /><circle cx="17" cy="17" r="2.500" fill="#fff" /></svg>
          <div className="absolute bottom-0 left-[5px] w-[39px] h-[2px] bg-[#76b9ed]" />
        </Taskbtn>
        <Taskbtn className="w-[49px] relative bg-[#26282b]">
          <div className="w-6 h-6 flex items-center justify-center bg-[#f6d6c4]">
            <svg width="20" height="20" viewBox="0 0 30 32"><path fillRule="evenodd" d="M1 31L13 1h9l6 30h-8l-1-7H11l-3 7zM13 18h5l-1.500-9z" fill="#b9222a" /></svg>
          </div>
          <div className="absolute bottom-0 left-0 w-full h-[2px] bg-[#76b9ed]" />
        </Taskbtn>

        <div className="ml-auto flex items-center pr-[19px]">
          <div className="w-[30px] flex justify-center">
            <svg width="16" height="16" viewBox="0 0 16 16" fill="none" stroke="#e8e8e8" strokeWidth="1.100"><circle cx="5" cy="7.500" r="2.500" /><path d="M.5 15c0-3 2-4 4.500-4s3 .8 3.500 2" /><circle cx="11" cy="4" r="3" /><path d="M8 8.500c2-1 6-1 7.500 3" /></svg>
          </div>
          <div className="w-[24px] ml-[8px] flex justify-center">
            <svg width="12" height="7" viewBox="0 0 12 7" fill="none" stroke="#e8e8e8" strokeWidth="1.200"><path d="M.5 6.500L6 1l5.500 5.500" /></svg>
          </div>
          <div className="w-[26px] flex justify-center">
            <svg width="18" height="12" viewBox="0 0 18 12" fill="none" stroke="#e8e8e8"><path d="M5.500 2.500h11v7h-11z" /><path d="M7 4h8v4H7z" fill="#e8e8e8" stroke="none" /><path d="M1 3v3M3.500 3v3M0 6h5v2H0" /></svg>
          </div>
          <div className="w-[20px] flex justify-center">
            <svg width="16" height="14" viewBox="0 0 16 14" fill="none" stroke="#e8e8e8"><path d="M.5 5h3L7 1.500v11L3.500 9h-3z" /><path d="M9 4.500c1 1.500 1 3.500 0 5M11 3c1.500 2.500 1.500 5.500 0 8M13 1.500c2 3 2 8 0 11" strokeOpacity=".7" /></svg>
          </div>
          <div className="w-[31px] flex justify-center">
            <svg width="16" height="13" viewBox="0 0 16 13" fill="none" stroke="#cfcfcf"><path d="M.5 12.500c0-6 6-12 14-12M3.500 12.500c0-5 4-9 10-9M6.500 12.500c0-3 3-6 7-6M9.500 12.500c0-1.500 2-3 4-3" /><circle cx="14" cy="12" r="1" fill="#eee" stroke="none" /></svg>
          </div>
          <div className="w-[26px] flex justify-center tracking-normal">ENG</div>
          <div className="w-[82px] flex flex-col items-center text-[12px] leading-[19px] tracking-[-0.35px]">
            <span>10:34 PM</span>
            <span>13/05/2020</span>
          </div>
          <div className="w-[28px] flex justify-center relative">
            <svg width="16" height="15" viewBox="0 0 16 15"><path d="M0 0h16v11H5l-3 3v-3H0z" fill="#f4f4f4" /><path d="M3 3h10M3 5.500h10M3 8h7" stroke="#111" /></svg>
            <div className="absolute left-[14px] top-[5px] w-[15px] h-[15px] rounded-full bg-[#3b3b3b] border border-[#9c9c9c] text-[10px] leading-[13px] text-center">3</div>
          </div>
        </div>
      </div>

      {/* docked palette, floats over the ribbon edge and the drawing area */}
      <div className="absolute left-[1342px] top-[100px] w-[21px] h-[597px] rounded-t-[4px] flex flex-col items-center bg-[#535353]">
        <div className="w-full h-[73px] flex flex-col items-center gap-[10px] pt-[6px] bg-gradient-to-b from-[#4e4e4e] to-[#3f3f3f] rounded-t-[4px]">
          <svg width="9" height="9" viewBox="0 0 9 9" stroke="#a8a8a8" strokeWidth="2"><path d="M1 1l7 7M8 1L1 8" /></svg>
          <svg width="9" height="9" viewBox="0 0 9 9" fill="#a8a8a8"><path d="M0 0h2v9H0zM3 3h3V0l3 4.500L6 9V6H3z" /></svg>
          <svg width="10" height="10" viewBox="0 0 10 10" fill="#a8a8a8"><path d="M2 0l3 2 3-2 2 2-2 3 2 3-2 2-3-2-3 2-2-2 2-3-2-3z" /></svg>
        </div>
        <div className="flex-1" />
        <div className="h-[113px] w-full mb-[12px] relative">
          <div className="absolute left-[10px] bottom-0 origin-bottom-left -rotate-90 whitespace-nowrap tracking-normal leading-none text-[#cfcfcf] translate-x-[6px]">MATERIALS BROWSER</div>
        </div>
        <div className="w-[11px] h-[11px] mb-[5px] rounded-full bg-[repeating-conic-gradient(#e4e4e4_0_25%,#333333_0_50%)] bg-[length:5px_5px]" />
      </div>
      <div className="absolute left-[1363px] top-[173px] w-[1px] h-[524px] bg-[#5cb4e8]" />
    </div>
  );
};

export default App;
